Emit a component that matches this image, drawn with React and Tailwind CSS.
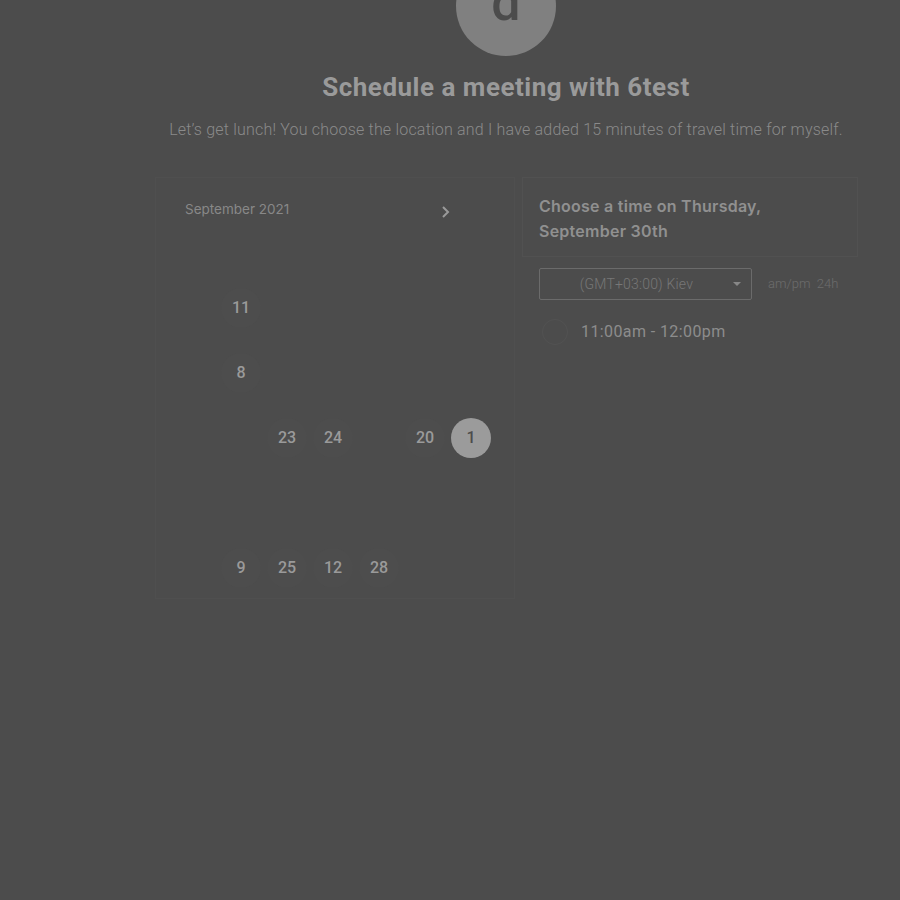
import React from 'react';

const rows = [
    [null, '11', null, null, null, null, null],
    [null, '8', null, null, null, null, null],
    [null, null, '23', '24', null, '20', '1'],
    [null, null, null, null, null, null, null],
    [null, '9', '25', '12', '28', null, null],
];

function DayCell({ label, active }) {
    if (!label) return <div className="w-[46px] h-[65px]" />;
    return (
        <div className="w-[46px] h-[65px] flex items-center justify-center">
            <div className={`w-10 h-10 rounded-full flex items-center justify-center text-[16px] font-medium ${active ? 'bg-[#9b9b9b] text-[#4c4c4c]' : 'bg-[#4d4d4d] text-[#9a9a9a]'}`} style={{ fontFamily: 'Roboto, sans-serif' }}>
                {label}
            </div>
        </div>
    );
}

export default function App() {
    return (
        <div className="min-h-[900px] w-full bg-[#4c4c4c] overflow-hidden relative" style={{ fontFamily: 'Inter, "Noto Sans", sans-serif' }}>
            {/* avatar */}
            <div className="flex justify-center pl-[112px] -mt-[44px]">
                <div className="w-[100px] h-[100px] rounded-full bg-[#808080] flex items-start justify-center overflow-hidden">
                    <span className="text-[52px] leading-none font-medium text-[#4c4c4c] mt-[21px]" style={{ fontFamily: 'Roboto, sans-serif' }}>d</span>
                </div>
            </div>

            <div className="pl-[112px] text-center" style={{ fontFamily: 'Roboto, sans-serif' }}>
                <h1 className="mt-[15px] text-[26px] leading-[32px] font-bold tracking-[0.5px] text-[#9a9a9a]">Schedule a meeting with 6test</h1>
                <p className="mt-[17px] text-[16px] leading-[20px] font-light text-[#8a8a8a] tracking-[0.2px]">
                    Let’s get lunch! You choose the location and I have added 15 minutes of travel time for myself.
                </p>
            </div>

            <div className="flex ml-[155px] mt-[37px] gap-[7px]">
                {/* calendar */}
                <div className="w-[360px] h-[422px] border border-[#4f4f4f]">
                    <div className="flex items-center justify-between pl-[29px] pr-[62px] pt-[21px]">
                        <span className="text-[13.5px] text-[#888]">September 2021</span>
                        <svg width="12" height="14" viewBox="0 0 12 14" className="mt-[6px]">
                            <path d="M3 2l5 5-5 5" fill="none" stroke="#9a9a9a" strokeWidth="2" />
                        </svg>
                    </div>
                    <div className="pl-[16px] mt-[56px] flex flex-col">
                        {rows.map((r, i) => (
                            <div key={i} className="flex">
                                {r.map((d, j) => (
                                    <DayCell key={j} label={d} active={d === '1'} />
                                ))}
                            </div>
                        ))}
                    </div>
                </div>

                {/* times */}
                <div className="w-[336px]">
                    <div className="h-[80px] border border-[#515151] pl-[16px] pt-[16px]">
                        <p className="text-[16px] leading-[25px] font-semibold tracking-[0.25px] text-[#909090]">
                            Choose a time on Thursday,<br />September 30th
                        </p>
                    </div>
                    <div className="flex items-center pl-[17px] mt-[11px]">
                        <div className="w-[213px] h-[32px] border border-[#6b6b6b] rounded-[2px] flex items-center justify-center pr-[18px] relative">
                            <span className="text-[14px] text-[#777] font-light tracking-[0.2px]" style={{ fontFamily: 'Roboto, sans-serif' }}>(GMT+03:00) Kiev</span>
                            <span className="absolute right-[10px] top-[13px] w-0 h-0 border-l-[4px] border-r-[4px] border-t-[4px] border-l-transparent border-r-transparent border-t-[#888]" />
                        </div>
                        <span className="ml-[16px] text-[13px] text-[#6c6c6c] font-light" style={{ fontFamily: 'Roboto, sans-serif' }}>am/pm&nbsp;&nbsp;24h</span>
                    </div>
                    <div className="flex items-center pl-[20px] mt-[19px]">
                        <div className="w-[26px] h-[26px] rounded-full border border-[#525252]" />
                        <span className="ml-[13px] text-[16px] tracking-[0.4px] text-[#8c8c8c]" style={{ fontFamily: 'Roboto, sans-serif' }}>11:00am - 12:00pm</span>
                    </div>
                </div>
            </div>
        </div>
    );
}
